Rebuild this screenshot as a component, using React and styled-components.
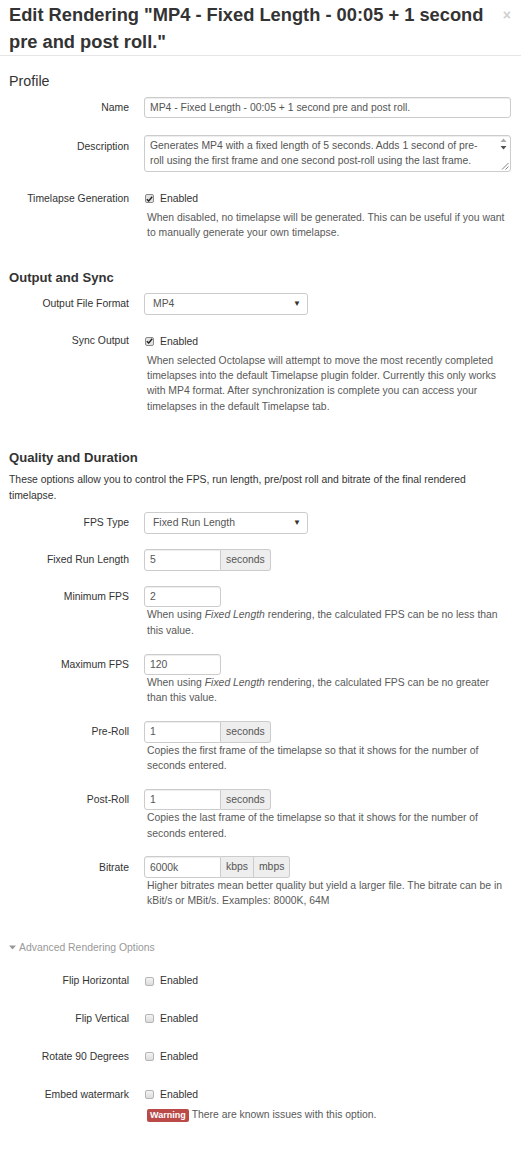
import React from 'react';
import styled, { createGlobalStyle } from 'styled-components';

const GlobalStyle = createGlobalStyle`
    body {
        margin: 0;
        background: #fff;
        font-family: "Liberation Sans", Arial, sans-serif;
        font-size: 10.4px;
        color: #333;
    }
`;

const Page = styled.div`
    width: 521px;
`;

const Header = styled.div`
    display: flex;
    justify-content: space-between;
    align-items: flex-start;
    padding: 1px 10px 0 9px;
    border-bottom: 1px solid #e5e5e5;
`;

const Title = styled.h3`
    margin: 0;
    width: 490px;
    font-size: 18.3px;
    line-height: 27px;
    font-weight: bold;
    color: #333;
`;

const Close = styled.button`
    background: none;
    border: 0;
    padding: 0;
    margin-top: 1px;
    color: #d0d0d0;
    font-family: "Liberation Sans", Arial, sans-serif;
    font-size: 14px;
    font-weight: bold;
    line-height: 27px;
    cursor: pointer;
`;

const Body = styled.div`
    padding: 18px 10px 40px 9px;
`;

// padding, not margin: the last row's margin-bottom would swallow a margin-top
const Section = styled.section`
    padding-top: ${p => p.$gap || 0}px;
`;

const SectionTitle = styled.h4`
    margin: 0 0 7.4px;
    font-size: ${p => (p.$light ? '14.3px' : '13.1px')};
    font-weight: ${p => (p.$light ? 'normal' : 'bold')};
    line-height: 15.4px;
    color: #333;
`;

const Intro = styled.p`
    margin: 0 0 8.5px;
    line-height: 15.4px;
    color: #333;
`;

const Row = styled.div`
    display: grid;
    grid-template-columns: 120px 1fr;
    column-gap: 15px;
    margin-bottom: 15.4px;
`;

const Label = styled.label`
    padding-top: 3.2px;
    text-align: right;
    line-height: 15.4px;
    color: #333;
    white-space: nowrap;
`;

const Controls = styled.div`
    min-width: 0;
`;

const InputGroup = styled.div`
    display: flex;
`;

const TextInput = styled.input`
    box-sizing: border-box;
    width: ${p => p.$width || '100%'};
    height: 21.4px;
    margin: 0;
    padding: 2px 5px;
    border: 1px solid #ccc;
    border-radius: ${p => (p.$attached ? '3px 0 0 3px' : '3px')};
    box-shadow: inset 0 1px 1px rgba(0, 0, 0, 0.075);
    font-family: inherit;
    font-size: 10.4px;
    line-height: 15.4px;
    color: #555;
    background: #fff;
    outline: none;
`;

const Addon = styled.span`
    box-sizing: border-box;
    height: 21.4px;
    padding: 2px 5px;
    background: #eee;
    border: 1px solid #ccc;
    border-left: 0;
    border-radius: ${p => (p.$last ? '0 3px 3px 0' : '0')};
    line-height: 15.4px;
    color: #555;
`;

const TextArea = styled.div`
    box-sizing: border-box;
    display: flex;
    height: 37px;
    margin-top: 1.5px;
    border: 1px solid #ccc;
    border-radius: 3px;
    box-shadow: inset 0 1px 1px rgba(0, 0, 0, 0.075);
    color: #555;
`;

const TextAreaContent = styled.div`
    flex: 1;
    padding: 2px 5px;
    line-height: 15.4px;
    white-space: nowrap;
    overflow: hidden;
`;

const ScrollCol = styled.div`
    width: 13px;
    display: flex;
    flex-direction: column;
    justify-content: space-between;
    align-items: center;
    padding: 2px 0 1px;
`;

const Select = styled.div`
    box-sizing: border-box;
    width: 164px;
    height: 22px;
    display: flex;
    align-items: center;
    justify-content: space-between;
    padding: 0 6px 0 8px;
    border: 1px solid #ccc;
    border-radius: 3px;
    background: #fff;
    color: #555;
`;

const Caret = styled.span`
    font-size: 8px;
    color: #333;
`;

const CheckLine = styled.label`
    display: flex;
    align-items: center;
    padding: 3.5px 0;
    line-height: 15.4px;
    color: #333;
`;

const Box = styled.span`
    box-sizing: border-box;
    width: 9px;
    height: 9px;
    margin: 0 6px 0 1px;
    border: 1px solid ${p => (p.$checked ? '#8a8a8a' : '#b5b5b5')};
    border-radius: 2px;
    background: ${p => (p.$checked ? '#e3e3e3' : 'linear-gradient(#f4f4f4, #dcdcdc)')};
    display: flex;
    align-items: center;
    justify-content: center;
`;

const Help = styled.p`
    margin: 0;
    padding-left: 3px;
    line-height: 15.4px;
    color: #595959;
`;

const Advanced = styled.div`
    display: flex;
    align-items: center;
    gap: 3px;
    margin: 31px 0 15px;
    line-height: 15.4px;
    color: #999;
`;

const Badge = styled.span`
    display: inline-block;
    padding: 0 3px;
    margin-right: 3px;
    background: #b94a48;
    border-radius: 2px;
    color: #fff;
    font-size: 9px;
    font-weight: bold;
    line-height: 13px;
`;

const WarningLine = styled(Help)`
    margin-top: 1px;
`;

const Check = ({ checked }) => (
    <Box $checked={checked}>
        {checked && (
            <svg width="7" height="6" viewBox="0 0 7 6">
                <path d="M0.8 3.2 L2.7 5 L6.2 0.8" fill="none" stroke="#222" strokeWidth="1.4" />
            </svg>
        )}
    </Box>
);

const CheckRow = ({ label, checked, children }) => (
    <Row>
        <Label>{label}</Label>
        <Controls>
            <CheckLine>
                <Check checked={checked} />
                Enabled
            </CheckLine>
            {children}
        </Controls>
    </Row>
);

const SecondsRow = ({ label, value, help }) => (
    <Row>
        <Label>{label}</Label>
        <Controls>
            <InputGroup>
                <TextInput $width="77px" $attached defaultValue={value} />
                <Addon $last>seconds</Addon>
            </InputGroup>
            {help && <Help>{help}</Help>}
        </Controls>
    </Row>
);

const FpsRow = ({ label, value, children }) => (
    <Row>
        <Label>{label}</Label>
        <Controls>
            <TextInput $width="77px" defaultValue={value} />
            <Help>{children}</Help>
        </Controls>
    </Row>
);

export default function App() {
    return (
        <Page>
            <GlobalStyle />
            <Header>
                <Title>Edit Rendering "MP4 - Fixed Length - 00:05 + 1 second pre and post roll."</Title>
                <Close>×</Close>
            </Header>
            <Body>
                <Section>
                    <SectionTitle $light>Profile</SectionTitle>
                    <Row>
                        <Label>Name</Label>
                        <Controls>
                            <TextInput defaultValue="MP4 - Fixed Length - 00:05 + 1 second pre and post roll." />
                        </Controls>
                    </Row>
                    <Row>
                        <Label style={{ paddingTop: 5 }}>Description</Label>
                        <Controls>
                            <TextArea>
                                <TextAreaContent>
                                    Generates MP4 with a fixed length of 5 seconds. Adds 1 second of pre-
                                    <br />
                                    roll using the first frame and one second post-roll using the last frame.
                                </TextAreaContent>
                                <ScrollCol>
                                    <svg width="7" height="12" viewBox="0 0 7 12">
                                        <path d="M3.5 0.5 L6.5 4 L0.5 4 Z" fill="#a8a8a8" />
                                        <path d="M0.5 8 L6.5 8 L3.5 11.5 Z" fill="#505050" />
                                    </svg>
                                    <svg width="8" height="8" viewBox="0 0 8 8" style={{ alignSelf: 'flex-end', marginRight: 1 }}>
                                        <path d="M7.5 1 L1 7.5 M7.5 4.5 L4.5 7.5" stroke="#777" strokeWidth="0.9" />
                                    </svg>
                                </ScrollCol>
                            </TextArea>
                        </Controls>
                    </Row>
                    <CheckRow label="Timelapse Generation" checked>
                        <Help>When disabled, no timelapse will be generated. This can be useful if you want to manually generate your own timelapse.</Help>
                    </CheckRow>
                </Section>

                <Section $gap={14}>
                    <SectionTitle>Output and Sync</SectionTitle>
                    <Row>
                        <Label>Output File Format</Label>
                        <Controls>
                            <Select>MP4<Caret>▼</Caret></Select>
                        </Controls>
                    </Row>
                    <CheckRow label="Sync Output" checked>
                        <Help>When selected Octolapse will attempt to move the most recently completed timelapses into the default Timelapse plugin folder. Currently this only works with MP4 format. After synchronization is complete you can access your timelapses in the default Timelapse tab.</Help>
                    </CheckRow>
                </Section>

                <Section $gap={20}>
                    <SectionTitle>Quality and Duration</SectionTitle>
                    <Intro>These options allow you to control the FPS, run length, pre/post roll and bitrate of the final rendered timelapse.</Intro>
                    <Row>
                        <Label>FPS Type</Label>
                        <Controls>
                            <Select>Fixed Run Length<Caret>▼</Caret></Select>
                        </Controls>
                    </Row>
                    <SecondsRow label="Fixed Run Length" value="5" />
                    <FpsRow label="Minimum FPS" value="2">
                        When using <i>Fixed Length</i> rendering, the calculated FPS can be no less than this value.
                    </FpsRow>
                    <FpsRow label="Maximum FPS" value="120">
                        When using <i>Fixed Length</i> rendering, the calculated FPS can be no greater than this value.
                    </FpsRow>
                    <SecondsRow label="Pre-Roll" value="1" help="Copies the first frame of the timelapse so that it shows for the number of seconds entered." />
                    <SecondsRow label="Post-Roll" value="1" help="Copies the last frame of the timelapse so that it shows for the number of seconds entered." />
                    <Row>
                        <Label>Bitrate</Label>
                        <Controls>
                            <InputGroup>
                                <TextInput $width="77px" $attached defaultValue="6000k" />
                                <Addon>kbps</Addon>
                                <Addon $last>mbps</Addon>
                            </InputGroup>
                            <Help>Higher bitrates mean better quality but yield a larger file. The bitrate can be in kBit/s or MBit/s. Examples: 8000K, 64M</Help>
                        </Controls>
                    </Row>
                </Section>

                <Advanced>
                    <svg width="7" height="5" viewBox="0 0 7 5">
                        <path d="M0 0.5 L7 0.5 L3.5 4.5 Z" fill="#999" />
                    </svg>
                    Advanced Rendering Options
                </Advanced>
                <CheckRow label="Flip Horizontal" />
                <CheckRow label="Flip Vertical" />
                <CheckRow label="Rotate 90 Degrees" />
                <CheckRow label="Embed watermark">
                    <WarningLine>
                        <Badge>Warning</Badge>
                        There are known issues with this option.
                    </WarningLine>
                </CheckRow>
            </Body>
        </Page>
    );
}
